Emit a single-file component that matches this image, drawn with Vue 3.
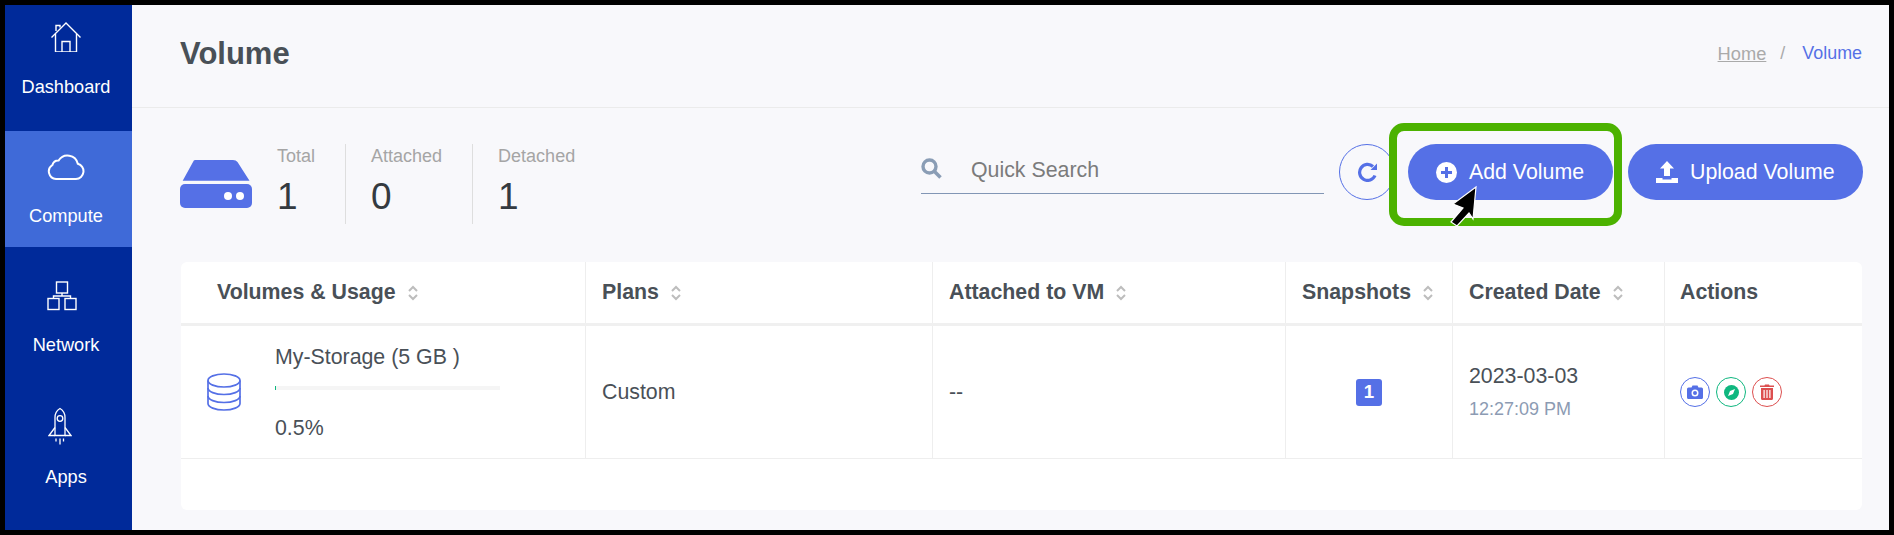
<script setup>
const stats = [
  { label: 'Total', value: 1 },
  { label: 'Attached', value: 0 },
  { label: 'Detached', value: 1 }
]

const columns = [
  { label: 'Volumes & Usage', sort: true },
  { label: 'Plans', sort: true },
  { label: 'Attached to VM', sort: true },
  { label: 'Snapshots', sort: true },
  { label: 'Created Date', sort: true },
  { label: 'Actions', sort: false }
]
</script>

<template>
  <div class="frame">
    <aside class="sidebar">
      <a class="nav-item first">
        <span class="nav-icon">
          <svg width="30" height="30" viewBox="0 0 30 30" fill="none" stroke="#fff" stroke-width="1.4">
            <path d="M.5 15.5 15 1l14.500 14.500" />
            <path d="M5 9V3.500h4v2" />
            <path d="M4.500 12v18h21V12" />
            <path d="M11 30V19.500h8V30" />
          </svg>
        </span>
        <span>Dashboard</span>
      </a>
      <a class="nav-item active">
        <span class="nav-icon">
          <svg width="38" height="26" viewBox="0 0 38 26" fill="none" stroke="#fff" stroke-width="2">
            <path d="M9 25h20a7.800 7.800 0 0 0 1.800-15.300A10.500 10.500 0 0 0 11.600 6.600 6.200 6.200 0 0 0 5.400 11 7.600 7.600 0 0 0 9 25Z" />
          </svg>
        </span>
        <span>Compute</span>
      </a>
      <a class="nav-item network">
        <span class="nav-icon">
          <svg width="30" height="30" viewBox="0 0 30 30" fill="none" stroke="#fff" stroke-width="1.4">
            <rect x="9.500" y="1" width="11" height="11" />
            <rect x="1" y="17.500" width="11" height="11" />
            <rect x="18" y="17.500" width="11" height="11" />
            <path d="M15 12v3M6.500 17.500V15h17v2.500" />
          </svg>
        </span>
        <span>Network</span>
      </a>
      <a class="nav-item apps">
        <span class="nav-icon">
          <svg width="24" height="38" viewBox="0 0 24 37" fill="none" stroke="#fff" stroke-width="1.3">
            <path d="M7 28V10C7 6 9.500 2.500 12 1c2.500 1.500 5 5 5 9v18Z" />
            <circle cx="12" cy="11" r="2.800" />
            <path d="M7 20 1 28h6M17 20l6 8h-6" />
            <path d="M8 31v3M12 31v6M15.500 31v3" />
          </svg>
        </span>
        <span>Apps</span>
      </a>
    </aside>

    <main class="main">
      <header class="page-head">
        <h1>Volume</h1>
        <nav class="crumbs">
          <a class="home">Home</a>
          <span class="sep">/</span>
          <span class="current">Volume</span>
        </nav>
      </header>

      <section class="toolbar">
        <svg class="hdd" width="72" height="49" viewBox="0 0 72 49">
          <path d="M15 1h38q3 0 4.500 2l12 18.700H2.700L13 3q.7-2 2-2Z" fill="#5570e6" />
          <rect y="25" width="72" height="24" rx="5" fill="#5570e6" />
          <circle cx="48" cy="37" r="4" fill="#fff" />
          <circle cx="60" cy="37" r="4" fill="#fff" />
        </svg>
        <div class="stats">
          <div v-for="s in stats" :key="s.label" class="stat">
            <div class="stat-label">{{ s.label }}</div>
            <div class="stat-value">{{ s.value }}</div>
          </div>
        </div>

        <div class="search">
          <svg width="21" height="21" viewBox="0 0 21 21" fill="none" stroke="#8a9db5">
            <circle cx="8.500" cy="8.500" r="6.500" stroke-width="3.400" />
            <path d="m13.500 13.500 6 6" stroke-width="3.600" />
          </svg>
          <span class="search-text">Quick Search</span>
        </div>

        <button class="refresh">
          <svg width="21" height="20" viewBox="0 0 21 20" fill="none" stroke="#5570e6" stroke-width="3.200">
            <path d="M18 13.500A8 8 0 1 1 16 4.500" />
            <path d="M20 1.500V8h-6.500Z" fill="#5570e6" stroke="none" />
          </svg>
        </button>

        <button class="btn add">
          <svg width="21" height="21" viewBox="0 0 21 21">
            <circle cx="10.500" cy="10.500" r="10.500" fill="#fff" />
            <path d="M10.500 5v11M5 10.500h11" stroke="#5570e6" stroke-width="3" />
          </svg>
          Add Volume
        </button>
        <button class="btn upload">
          <svg width="22" height="22" viewBox="0 0 22 22" fill="#fff">
            <path d="M11 0l7 7.500h-4V15H8V7.500H4Z" />
            <path d="M0 17h6.500v1.500h9V17H22v5H0Z" />
          </svg>
          Upload Volume
        </button>
      </section>

      <section class="table">
        <div class="row head">
          <div v-for="c in columns" :key="c.label" class="cell">
            {{ c.label }}
            <svg v-if="c.sort" class="sort" width="10" height="16" viewBox="0 0 10 16" fill="none" stroke="#bdbdbd" stroke-width="2">
              <path d="m1 6 4-4 4 4M1 10l4 4 4-4" />
            </svg>
          </div>
        </div>
        <div class="row body">
          <div class="cell volume">
            <svg width="34" height="38" viewBox="0 0 34 38" fill="none" stroke="#5570e6" stroke-width="1.700">
              <ellipse cx="17" cy="7.500" rx="16" ry="6.500" />
              <path d="M1 7.500v23c0 3.600 7.200 6.500 16 6.500s16-2.900 16-6.500v-23" />
              <path d="M1 15c0 3.600 7.200 6.500 16 6.500S33 18.600 33 15M1 23c0 3.600 7.200 6.500 16 6.500S33 26.600 33 23" />
            </svg>
            <div class="usage">
              <div>My-Storage (5 GB )</div>
              <div class="bar"><div class="bar-fill" :style="{ width: '0.5%' }"></div></div>
              <div>0.5%</div>
            </div>
          </div>
          <div class="cell">Custom</div>
          <div class="cell">--</div>
          <div class="cell center"><span class="badge">1</span></div>
          <div class="cell date">
            <div>2023-03-03</div>
            <div class="time">12:27:09 PM</div>
          </div>
          <div class="cell actions">
            <span class="action blue">
              <svg width="16" height="14" viewBox="0 0 16 14">
                <path fill-rule="evenodd" d="M1.500 2.500h3L5.500.5h5l1 2h3Q16 2.500 16 4v8.500Q16 14 14.500 14h-13Q0 14 0 12.500V4q0-1.500 1.500-1.500ZM8 4.500a3.500 3.500 0 1 0 0 7 3.500 3.500 0 0 0 0-7Zm0 1.500a2 2 0 1 1 0 4 2 2 0 0 1 0-4Z" fill="#5570e6" />
              </svg>
            </span>
            <span class="action green">
              <svg width="15" height="15" viewBox="0 0 15 15">
                <circle cx="7.500" cy="7.500" r="7.500" fill="#0fb77f" />
                <path d="M11 4 9 9 4 11l2-5Z" fill="#fff" />
              </svg>
            </span>
            <span class="action red">
              <svg width="14" height="16" viewBox="0 0 14 16">
                <path fill-rule="evenodd" d="M0 1.500h4.500L5 .5h4l.5 1H14V3H0ZM1 4h12v10.500q0 1.500-1.500 1.500h-9Q1 16 1 14.500ZM3.500 6v8h1.200V6Zm2.900 0v8h1.200V6Zm2.900 0v8h1.200V6Z" fill="#dc4f4f" />
              </svg>
            </span>
          </div>
        </div>
      </section>
    </main>

    <div class="highlight"></div>
    <svg class="cursor" width="40" height="52" viewBox="0 0 40 52">
      <path d="M31 7 8 24l10 4L6 42l6 4 12-13 4 6Z" fill="#000" stroke="#fff" stroke-width="1.200" />
    </svg>
  </div>
</template>

<style>
body {
  background: #000;
}
</style>

<style scoped>
.frame {
  position: relative;
  box-sizing: border-box;
  width: 1894px;
  height: 535px;
  border: 5px solid #000;
  display: flex;
  overflow: hidden;
  font-family: "Liberation Sans", Arial, sans-serif;
  font-size: 21.33px;
  color: #495057;
}

.sidebar {
  width: 127px;
  flex-shrink: 0;
  background: #002a9a;
  color: #fff;
  font-size: 18.2px;
}

.nav-item {
  height: 116px;
  margin-bottom: 13px;
  display: flex;
  flex-direction: column;
  align-items: center;
  box-sizing: border-box;
  padding: 16px 5px 0 0;
}

.nav-item.first {
  height: 113px;
  padding-top: 12px;
}

.nav-item.first .nav-icon {
  margin-bottom: 20px;
}

.nav-item.active {
  background: #3f6ad8;
}

.nav-item.network svg {
  margin-right: 8px;
}

.nav-item.apps {
  padding-top: 17px;
}

.nav-item.apps svg {
  margin-right: 12px;
}

.nav-item.apps .nav-icon {
  margin-bottom: 21px;
}

.nav-icon {
  height: 40px;
  display: flex;
  align-items: center;
  margin-bottom: 19px;
}

.main {
  flex: 1;
  min-width: 0;
  background: #f8f8fb;
}

.page-head {
  height: 103px;
  box-sizing: border-box;
  border-bottom: 1px solid #ebebeb;
  padding: 0 27px 5px 48px;
  display: flex;
  align-items: center;
  justify-content: space-between;
}

h1 {
  margin: 0;
  font-size: 31px;
  font-weight: 700;
  color: #495057;
}

.crumbs {
  display: flex;
  align-items: center;
  font-size: 17.9px;
  color: #aaa;
}

.home {
  font-size: 18.3px;
  text-decoration: underline;
}

.sep {
  margin: 0 17px 0 14px;
}

.current {
  color: #5570e6;
}

.toolbar {
  display: flex;
  align-items: flex-start;
  padding: 36px 26px 0 48px;
  height: 118px;
  box-sizing: content-box;
}

.hdd {
  margin-top: 15px;
  flex-shrink: 0;
}

.stats {
  display: flex;
}

.stat {
  height: 80px;
  box-sizing: content-box;
  padding: 0 30px 0 25px;
  border-right: 1px solid #dedede;
}

.stat:last-child {
  border-right: 0;
}

.stat-label {
  font-size: 18px;
  line-height: 24px;
  color: #a5a5a5;
}

.stat-value {
  font-size: 37px;
  line-height: 40px;
  margin-top: 9px;
  color: #343a40;
}

.search {
  margin-left: auto;
  width: 403px;
  height: 50px;
  box-sizing: border-box;
  border-bottom: 1px solid #8296b5;
  display: flex;
  align-items: flex-start;
  padding-top: 14px;
}

.search-text {
  margin-left: 29px;
  font-size: 21.33px;
  line-height: 24px;
  color: #7b7b7b;
}

.refresh {
  width: 56px;
  height: 56px;
  margin-left: 15px;
  padding: 0;
  border-radius: 50%;
  border: 1px solid #5570e6;
  background: transparent;
  display: flex;
  align-items: center;
  justify-content: center;
}

.btn {
  height: 56px;
  border: 0;
  border-radius: 28px;
  background: #5570e6;
  color: #fff;
  font: inherit;
  display: flex;
  align-items: center;
  gap: 12px;
  padding: 0 28px;
}

.add {
  width: 205px;
  margin-left: 13px;
}

.upload {
  width: 235px;
  margin-left: 15px;
}

.table {
  margin: 0 27px 0 49px;
  background: #fff;
  border-radius: 6px;
  height: 248px;
  overflow: hidden;
}

.row {
  display: grid;
  grid-template-columns: 405px 347px 353px 167px 212px 197px;
}

.head {
  height: 64px;
  border-bottom: 3px solid #f0f0f0;
  box-sizing: border-box;
  font-weight: 700;
}

.body {
  height: 133px;
  border-bottom: 1px solid #eee;
  box-sizing: border-box;
}

.cell {
  display: flex;
  align-items: center;
  padding-left: 16px;
  border-right: 1px solid #eee;
  box-sizing: border-box;
}

.cell:last-child {
  border-right: 0;
  padding-left: 15px;
}

.head .cell:first-child {
  padding-left: 36px;
}

.sort {
  margin-left: 12px;
}

.volume {
  padding-left: 26px;
  gap: 34px;
}

.usage {
  line-height: 24px;
}

.bar {
  width: 225px;
  height: 4px;
  background: #f5f5f5;
  margin: 17px 0 26px;
}

.bar-fill {
  height: 100%;
  background: #0fb77f;
}

.center {
  justify-content: center;
  padding-left: 0;
}

.badge {
  width: 26px;
  height: 27px;
  border-radius: 3px;
  background: #5570e6;
  color: #fff;
  font-size: 18.67px;
  font-weight: 700;
  display: flex;
  align-items: center;
  justify-content: center;
}

.date {
  flex-direction: column;
  align-items: flex-start;
  justify-content: center;
  line-height: 24px;
}

.time {
  font-size: 18px;
  margin-top: 9px;
  color: #8c9bb3;
}

.actions {
  gap: 6px;
}

.action {
  width: 30px;
  height: 30px;
  box-sizing: border-box;
  border-radius: 50%;
  border: 1px solid;
  display: flex;
  align-items: center;
  justify-content: center;
}

.blue {
  border-color: #5570e6;
}

.green {
  border-color: #0fb77f;
}

.red {
  border-color: #dc4f4f;
}

.highlight {
  position: absolute;
  left: 1384px;
  top: 118px;
  width: 233px;
  height: 103px;
  box-sizing: border-box;
  border: 8px solid #4cb200;
  border-radius: 15px;
}

.cursor {
  position: absolute;
  left: 1440px;
  top: 175px;
}
</style>
